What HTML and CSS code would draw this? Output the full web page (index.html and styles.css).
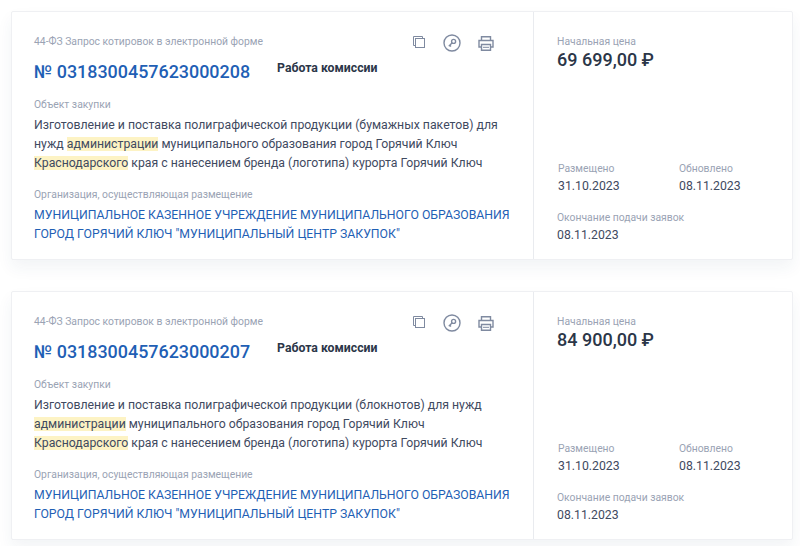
FILE: index.html
```html
<!DOCTYPE html>
<html lang="ru">
<head>
    <meta charset="UTF-8">
    <meta name="viewport" content="width=device-width, initial-scale=1.0">
    <title>Закупки</title>
    <link rel="stylesheet" href="styles.css">
</head>
<body>
    <svg class="sprite" width="0" height="0">
        <symbol id="i-copy" viewBox="0 0 14 14">
            <path d="M3.5 10.5H1.5V1.5H10.5V3.5" fill="none" stroke="currentColor"/>
            <rect x="3.5" y="3.5" width="9" height="9" fill="none" stroke="currentColor"/>
        </symbol>
        <symbol id="i-key" viewBox="0 0 18 18">
            <circle cx="9" cy="9" r="8" fill="none" stroke="currentColor" stroke-width="1.4"/>
            <circle cx="10.6" cy="7.4" r="2" fill="none" stroke="currentColor" stroke-width="1.4"/>
            <path d="M9.2 8.8L5.8 12.2M6.8 11.2L8 12.4" fill="none" stroke="currentColor" stroke-width="1.4"/>
        </symbol>
        <symbol id="i-print" viewBox="0 0 16 15">
            <path d="M3.5 4.5V.8H12.5V4.5" fill="none" stroke="currentColor" stroke-width="1.4"/>
            <path d="M3.5 11H1V4.5H15V11H12.5" fill="none" stroke="currentColor" stroke-width="1.4"/>
            <path d="M3.5 8.5H12.5V14.2H3.5Z" fill="none" stroke="currentColor" stroke-width="1.4"/>
            <path d="M5 11.3H11" fill="none" stroke="currentColor"/>
        </symbol>
    </svg>

    <div class="card">
        <div class="card-main">
            <div class="card-top">
                <div class="caption">44-ФЗ Запрос котировок в электронной форме</div>
                <div class="actions">
                    <svg class="icon icon-copy"><use href="#i-copy"/></svg>
                    <svg class="icon icon-key"><use href="#i-key"/></svg>
                    <svg class="icon icon-print"><use href="#i-print"/></svg>
                </div>
            </div>
            <div class="title-row">
                <a class="number">№ 0318300457623000208</a>
                <span class="status">Работа комиссии</span>
            </div>
            <div class="caption caption-object">Объект закупки</div>
            <p class="descr">Изготовление и поставка полиграфической продукции (бумажных пакетов) для<br>нужд <mark>администрации</mark> муниципального образования город Горячий Ключ<br><mark>Краснодарского</mark> края с нанесением бренда (логотипа) курорта Горячий Ключ</p>
            <div class="caption caption-org">Организация, осуществляющая размещение</div>
            <a class="org">МУНИЦИПАЛЬНОЕ КАЗЕННОЕ УЧРЕЖДЕНИЕ МУНИЦИПАЛЬНОГО ОБРАЗОВАНИЯ<br>ГОРОД ГОРЯЧИЙ КЛЮЧ "МУНИЦИПАЛЬНЫЙ ЦЕНТР ЗАКУПОК"</a>
        </div>
        <div class="card-side">
            <div class="caption">Начальная цена</div>
            <div class="price">69 699,00 ₽</div>
            <div class="dates">
                <div>
                    <div class="caption">Размещено</div>
                    <div class="date">31.10.2023</div>
                </div>
                <div>
                    <div class="caption">Обновлено</div>
                    <div class="date">08.11.2023</div>
                </div>
            </div>
            <div class="caption caption-end">Окончание подачи заявок</div>
            <div class="date">08.11.2023</div>
        </div>
    </div>

    <div class="card">
        <div class="card-main">
            <div class="card-top">
                <div class="caption">44-ФЗ Запрос котировок в электронной форме</div>
                <div class="actions">
                    <svg class="icon icon-copy"><use href="#i-copy"/></svg>
                    <svg class="icon icon-key"><use href="#i-key"/></svg>
                    <svg class="icon icon-print"><use href="#i-print"/></svg>
                </div>
            </div>
            <div class="title-row">
                <a class="number">№ 0318300457623000207</a>
                <span class="status">Работа комиссии</span>
            </div>
            <div class="caption caption-object">Объект закупки</div>
            <p class="descr">Изготовление и поставка полиграфической продукции (блокнотов) для нужд<br><mark>администрации</mark> муниципального образования город Горячий Ключ<br><mark>Краснодарского</mark> края с нанесением бренда (логотипа) курорта Горячий Ключ</p>
            <div class="caption caption-org">Организация, осуществляющая размещение</div>
            <a class="org">МУНИЦИПАЛЬНОЕ КАЗЕННОЕ УЧРЕЖДЕНИЕ МУНИЦИПАЛЬНОГО ОБРАЗОВАНИЯ<br>ГОРОД ГОРЯЧИЙ КЛЮЧ "МУНИЦИПАЛЬНЫЙ ЦЕНТР ЗАКУПОК"</a>
        </div>
        <div class="card-side">
            <div class="caption">Начальная цена</div>
            <div class="price">84 900,00 ₽</div>
            <div class="dates">
                <div>
                    <div class="caption">Размещено</div>
                    <div class="date">31.10.2023</div>
                </div>
                <div>
                    <div class="caption">Обновлено</div>
                    <div class="date">08.11.2023</div>
                </div>
            </div>
            <div class="caption caption-end">Окончание подачи заявок</div>
            <div class="date">08.11.2023</div>
        </div>
    </div>
</body>
</html>
```
FILE: styles.css
```css
body {
    font-family: Roboto, "Liberation Sans", sans-serif;
    margin: 0;
    padding: 11px 7px 0 11px;
    background-color: #fff;
    color: #3f4a5f;
    overflow: hidden;
}

.sprite {
    display: block;
    height: 0;
}

.card {
    display: flex;
    height: 249px;
    margin-bottom: 31px;
    box-sizing: border-box;
    border: 1px solid #eff0f3;
    border-radius: 2px;
    background-color: #fff;
    box-shadow: 0 8px 16px rgba(40, 60, 100, 0.06);
}

.card-main {
    width: 522px;
    padding: 23px 0 0 22px;
    box-sizing: border-box;
    border-right: 1px solid #e9ebef;
}

.card-side {
    flex: 1;
    padding: 23px 0 0 23px;
}

.card-top {
    display: flex;
    justify-content: space-between;
    height: 13px;
}

.caption {
    font-size: 10.35px;
    line-height: 13px;
    color: #9aa3b4;
}

.actions {
    display: flex;
    align-items: center;
    margin-right: 39px;
}

.icon {
    color: #7f8aa0;
    display: block;
}

.icon-copy {
    width: 14px;
    height: 14px;
    margin-right: 17px;
}

.icon-key {
    width: 18px;
    height: 18px;
    margin-top: 2px;
    margin-right: 17px;
}

.icon-print {
    width: 16px;
    height: 15px;
    margin-top: 4px;
}

.title-row {
    display: flex;
    align-items: center;
    margin-top: 11px;
    height: 24px;
}

.number {
    font-size: 17.92px;
    font-weight: 500;
    color: #1f5fb5;
}

.status {
    margin-left: 27px;
    margin-top: -6px;
    font-size: 12.25px;
    font-weight: 700;
    color: #2b3648;
}

.caption-object {
    margin-top: 15px;
}

.descr {
    margin: 5px 0 0;
    font-size: 12.27px;
    line-height: 19px;
}

mark {
    background-color: #fdf3c4;
    color: inherit;
}

.caption-org {
    margin-top: 15px;
}

.org {
    display: block;
    margin-top: 5px;
    font-size: 12.27px;
    line-height: 19px;
    color: #1f5fb5;
}

.price {
    font-size: 18px;
    line-height: 24px;
    font-weight: 500;
    color: #2b3648;
}

.dates {
    display: grid;
    grid-template-columns: 121px 1fr;
    margin-top: 90px;
    margin-left: 1px;
}

.date {
    margin-top: 4px;
    font-size: 12.27px;
    line-height: 15px;
}

.caption-end {
    margin-top: 17px;
}
```
